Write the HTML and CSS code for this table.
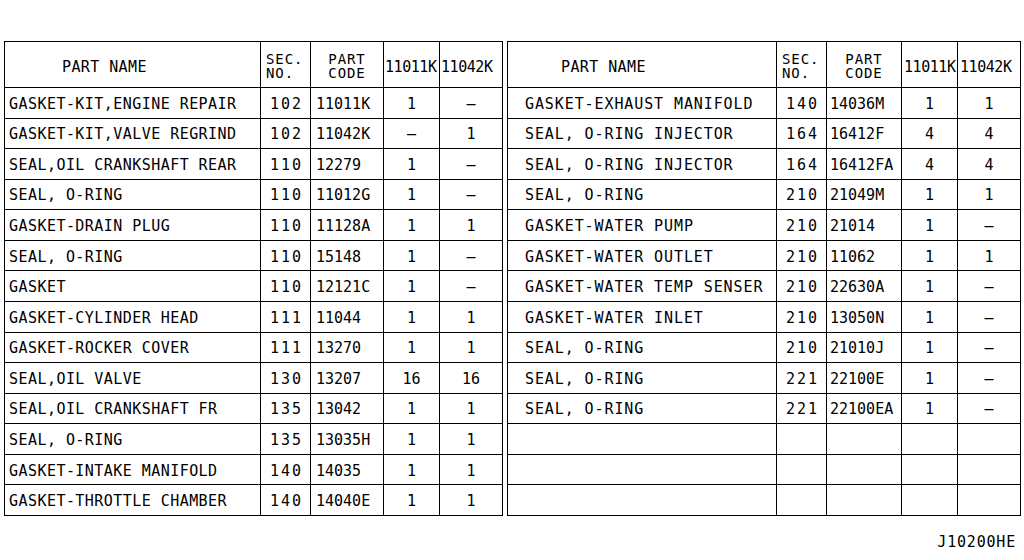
FILE: index.html
```html
<!DOCTYPE html>
<html>
<head>
<meta charset="utf-8">
<link rel="stylesheet" href="styles.css">
</head>
<body>
<div class="sheet">
  <div class="tables">
    <div class="grid left">
      <div class="c h name">PART NAME</div>
      <div class="c h sec">SEC.<br>NO.</div>
      <div class="c h code">PART<br>CODE</div>
      <div class="c h qh">11011K</div>
      <div class="c h qh">11042K</div>

      <div class="c n">GASKET-KIT,ENGINE REPAIR</div><div class="c s">102</div><div class="c p">11011K</div><div class="c q">1</div><div class="c q">–</div>
      <div class="c n">GASKET-KIT,VALVE REGRIND</div><div class="c s">102</div><div class="c p">11042K</div><div class="c q">–</div><div class="c q">1</div>
      <div class="c n">SEAL,OIL CRANKSHAFT REAR</div><div class="c s">110</div><div class="c p">12279</div><div class="c q">1</div><div class="c q">–</div>
      <div class="c n">SEAL, O-RING</div><div class="c s">110</div><div class="c p">11012G</div><div class="c q">1</div><div class="c q">–</div>
      <div class="c n">GASKET-DRAIN PLUG</div><div class="c s">110</div><div class="c p">11128A</div><div class="c q">1</div><div class="c q">1</div>
      <div class="c n">SEAL, O-RING</div><div class="c s">110</div><div class="c p">15148</div><div class="c q">1</div><div class="c q">–</div>
      <div class="c n">GASKET</div><div class="c s">110</div><div class="c p">12121C</div><div class="c q">1</div><div class="c q">–</div>
      <div class="c n">GASKET-CYLINDER HEAD</div><div class="c s">111</div><div class="c p">11044</div><div class="c q">1</div><div class="c q">1</div>
      <div class="c n">GASKET-ROCKER COVER</div><div class="c s">111</div><div class="c p">13270</div><div class="c q">1</div><div class="c q">1</div>
      <div class="c n">SEAL,OIL VALVE</div><div class="c s">130</div><div class="c p">13207</div><div class="c q">16</div><div class="c q">16</div>
      <div class="c n">SEAL,OIL CRANKSHAFT FR</div><div class="c s">135</div><div class="c p">13042</div><div class="c q">1</div><div class="c q">1</div>
      <div class="c n">SEAL, O-RING</div><div class="c s">135</div><div class="c p">13035H</div><div class="c q">1</div><div class="c q">1</div>
      <div class="c n">GASKET-INTAKE MANIFOLD</div><div class="c s">140</div><div class="c p">14035</div><div class="c q">1</div><div class="c q">1</div>
      <div class="c n">GASKET-THROTTLE CHAMBER</div><div class="c s">140</div><div class="c p">14040E</div><div class="c q">1</div><div class="c q">1</div>
    </div>

    <div class="grid right">
      <div class="c h name">PART NAME</div>
      <div class="c h sec">SEC.<br>NO.</div>
      <div class="c h code">PART<br>CODE</div>
      <div class="c h qh">11011K</div>
      <div class="c h qh">11042K</div>

      <div class="c n">GASKET-EXHAUST MANIFOLD</div><div class="c s">140</div><div class="c p">14036M</div><div class="c q">1</div><div class="c q">1</div>
      <div class="c n">SEAL, O-RING INJECTOR</div><div class="c s">164</div><div class="c p">16412F</div><div class="c q">4</div><div class="c q">4</div>
      <div class="c n">SEAL, O-RING INJECTOR</div><div class="c s">164</div><div class="c p">16412FA</div><div class="c q">4</div><div class="c q">4</div>
      <div class="c n">SEAL, O-RING</div><div class="c s">210</div><div class="c p">21049M</div><div class="c q">1</div><div class="c q">1</div>
      <div class="c n">GASKET-WATER PUMP</div><div class="c s">210</div><div class="c p">21014</div><div class="c q">1</div><div class="c q">–</div>
      <div class="c n">GASKET-WATER OUTLET</div><div class="c s">210</div><div class="c p">11062</div><div class="c q">1</div><div class="c q">1</div>
      <div class="c n">GASKET-WATER TEMP SENSER</div><div class="c s">210</div><div class="c p">22630A</div><div class="c q">1</div><div class="c q">–</div>
      <div class="c n">GASKET-WATER INLET</div><div class="c s">210</div><div class="c p">13050N</div><div class="c q">1</div><div class="c q">–</div>
      <div class="c n">SEAL, O-RING</div><div class="c s">210</div><div class="c p">21010J</div><div class="c q">1</div><div class="c q">–</div>
      <div class="c n">SEAL, O-RING</div><div class="c s">221</div><div class="c p">22100E</div><div class="c q">1</div><div class="c q">–</div>
      <div class="c n">SEAL, O-RING</div><div class="c s">221</div><div class="c p">22100EA</div><div class="c q">1</div><div class="c q">–</div>
      <div class="c n"></div><div class="c s"></div><div class="c p"></div><div class="c q"></div><div class="c q"></div>
      <div class="c n"></div><div class="c s"></div><div class="c p"></div><div class="c q"></div><div class="c q"></div>
      <div class="c n"></div><div class="c s"></div><div class="c p"></div><div class="c q"></div><div class="c q"></div>
    </div>
  </div>
  <div class="footer">J10200HE</div>
</div>
</body>
</html>
```

FILE: styles.css
```css
html, body {
  margin: 0;
  padding: 0;
  background: #fff;
}

.sheet {
  width: 1024px;
  height: 560px;
  padding: 41px 0 0 4px;
  box-sizing: border-box;
  font-family: "DejaVu Sans Mono", "Liberation Mono", monospace;
  color: #000;
}

.tables {
  display: flex;
  gap: 4px;
}

.grid {
  display: grid;
  grid-template-rows: 46px repeat(14, 30.57px);
  border-top: 1px solid #000;
  border-left: 1px solid #000;
}

.left {
  grid-template-columns: 256px 50px 73px 56px 63px;
}

.right {
  grid-template-columns: 269px 50px 75px 56px 63px;
}

.c {
  border-right: 1px solid #000;
  border-bottom: 1px solid #000;
  display: flex;
  align-items: center;
  font-size: 15px;
  white-space: nowrap;
  overflow: visible;
  padding-top: 2px;
  box-sizing: border-box;
}

.h {
  font-size: 15px;
  line-height: 15px;
  padding-top: 4px;
}

.h.sec,
.h.code {
  font-size: 14px;
  line-height: 14.5px;
  padding-top: 3px;
}

.h.name {
  padding-left: 57px;
  padding-top: 6px;
  letter-spacing: 0.4px;
}

.right .h.name {
  padding-left: 53px;
}

.h.sec {
  padding-left: 5px;
  letter-spacing: 0.9px;
}

.h.code {
  justify-content: center;
  text-align: center;
  letter-spacing: 0.9px;
}

.h.qh {
  letter-spacing: -0.45px;
  padding-left: 1px;
  padding-top: 5px;
}

.right .h.qh {
  padding-left: 2px;
}

.n {
  padding-left: 4px;
  letter-spacing: 0.45px;
}

.right .n {
  padding-left: 17px;
  letter-spacing: 0.9px;
}

.s {
  justify-content: center;
  letter-spacing: 2px;
  padding-left: 2px;
}

.p {
  padding-left: 5px;
}

.right .p {
  padding-left: 3px;
}

.q {
  justify-content: center;
}

.footer {
  text-align: right;
  padding-right: 8px;
  margin-top: 17px;
  font-size: 15px;
  letter-spacing: 0.8px;
}
```
